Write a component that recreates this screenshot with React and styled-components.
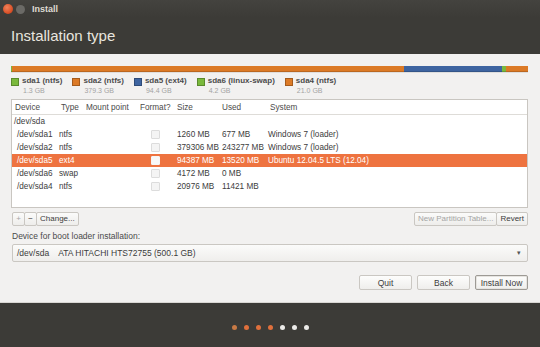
import React from 'react';
import styled, { createGlobalStyle } from 'styled-components';

const FONT = '"Liberation Sans", Arial, sans-serif';

const GlobalStyle = createGlobalStyle`
  html, body {
    margin: 0;
    padding: 0;
    background: #3c3b37;
  }
  body {
    font-family: ${FONT};
  }
`;

const PARTITIONS = [
  { name: 'sda1 (ntfs)', size: '1.3 GB', gb: 1.3, color: '#7ab93c' },
  { name: 'sda2 (ntfs)', size: '379.3 GB', gb: 379.3, color: '#dc7a26' },
  { name: 'sda5 (ext4)', size: '94.4 GB', gb: 94.4, color: '#3e64a0' },
  { name: 'sda6 (linux-swap)', size: '4.2 GB', gb: 4.2, color: '#7ab93c' },
  { name: 'sda4 (ntfs)', size: '21.0 GB', gb: 21.0, color: '#dc7a26' },
];

const ROWS = [
  { device: '/dev/sda1', type: 'ntfs', size: '1260 MB', used: '677 MB', system: 'Windows 7 (loader)' },
  { device: '/dev/sda2', type: 'ntfs', size: '379306 MB', used: '243277 MB', system: 'Windows 7 (loader)' },
  { device: '/dev/sda5', type: 'ext4', size: '94387 MB', used: '13520 MB', system: 'Ubuntu 12.04.5 LTS (12.04)', selected: true },
  { device: '/dev/sda6', type: 'swap', size: '4172 MB', used: '0 MB', system: '' },
  { device: '/dev/sda4', type: 'ntfs', size: '20976 MB', used: '11421 MB', system: '' },
];

const STEPS = ['#c87a45', '#e0703c', '#e0703c', '#e0703c', '#ecebe8', '#ecebe8', '#ecebe8'];

const App = () => {
  const total = PARTITIONS.reduce((s, p) => s + p.gb, 0);
  return (
    <>
      <GlobalStyle />
      <Window>
        <TitleBar>
          <CloseDot />
          <MinDot />
          <WindowTitle>Install</WindowTitle>
        </TitleBar>
        <Header>
          <Heading>Installation type</Heading>
        </Header>
        <Main>
          <PartitionBar>
            {PARTITIONS.map((p) => (
              <Segment key={p.name} color={p.color} style={{ flexGrow: p.gb / total }} />
            ))}
          </PartitionBar>
          <Legend>
            {PARTITIONS.map((p) => (
              <LegendItem key={p.name}>
                <Swatch color={p.color} />
                <LegendText>
                  <LegendName>{p.name}</LegendName>
                  <LegendSize>{p.size}</LegendSize>
                </LegendText>
              </LegendItem>
            ))}
          </Legend>
          <Table>
            <HeadRow>
              <HeadCell>Device</HeadCell>
              <HeadCell shift>Type</HeadCell>
              <HeadCell>Mount point</HeadCell>
              <HeadCell>Format?</HeadCell>
              <HeadCell>Size</HeadCell>
              <HeadCell>Used</HeadCell>
              <HeadCell shift>System</HeadCell>
            </HeadRow>
            <Row>
              <DiskCell>/dev/sda</DiskCell>
            </Row>
            {ROWS.map((r) => (
              <Row key={r.device} selected={r.selected}>
                <DeviceCell>{r.device}</DeviceCell>
                <Cell>{r.type}</Cell>
                <Cell />
                <CheckCell>
                  <Check selected={r.selected} />
                </CheckCell>
                <Cell>{r.size}</Cell>
                <Cell>{r.used}</Cell>
                <Cell>{r.system}</Cell>
              </Row>
            ))}
          </Table>
          <ToolRow>
            <ButtonGroup>
              <ToolButton disabled narrow>+</ToolButton>
              <ToolButton narrow>−</ToolButton>
              <ToolButton>Change...</ToolButton>
            </ButtonGroup>
            <ButtonGroup>
              <ToolButton disabled>New Partition Table...</ToolButton>
              <ToolButton>Revert</ToolButton>
            </ButtonGroup>
          </ToolRow>
          <FieldLabel>Device for boot loader installation:</FieldLabel>
          <Select>
            <SelectText>
              <span>/dev/sda</span>
              <span>ATA HITACHI HTS72755 (500.1 GB)</span>
            </SelectText>
            <Arrow>▾</Arrow>
          </Select>
          <Actions>
            <ActionButton>Quit</ActionButton>
            <ActionButton>Back</ActionButton>
            <ActionButton primary>Install Now</ActionButton>
          </Actions>
        </Main>
        <Footer>
          {STEPS.map((c, i) => (
            <StepDot key={i} color={c} />
          ))}
        </Footer>
      </Window>
    </>
  );
};

const Window = styled.div`
  width: 540px;
  height: 347px;
  display: flex;
  flex-direction: column;
  overflow: hidden;
  font-family: ${FONT};
  color: #3c3c3c;
`;

const TitleBar = styled.div`
  height: 17px;
  display: flex;
  align-items: center;
  padding-left: 3px;
  background: linear-gradient(#44433f, #3c3b37);
`;

const CloseDot = styled.div`
  width: 10px;
  height: 10px;
  border-radius: 50%;
  background: radial-gradient(circle at 40% 35%, #f2825a, #d64b22 70%);
  margin-top: 1px;
`;

const MinDot = styled.div`
  width: 9px;
  height: 9px;
  border-radius: 50%;
  margin-left: 3px;
  margin-top: 1px;
  background: #6b6a66;
`;

const WindowTitle = styled.span`
  margin-left: 7px;
  margin-top: 1px;
  font-size: 9px;
  font-weight: bold;
  color: #dfdbd2;
`;

const Header = styled.div`
  height: 37px;
  background: #3c3b37;
  padding-left: 11px;
  display: flex;
  align-items: center;
`;

const Heading = styled.h1`
  margin: 0;
  font-size: 15px;
  font-weight: normal;
  color: #e8e5df;
`;

const Main = styled.div`
  flex: 1;
  background: #f2f1f0;
  padding: 12px 12px 0 11px;
  display: flex;
  flex-direction: column;
  border-bottom: 1px solid #d9d7d3;
`;

const PartitionBar = styled.div`
  height: 6px;
  display: flex;
  box-shadow: 0 1px 0 rgba(0, 0, 0, 0.08);
`;

const Segment = styled.div`
  flex-basis: 0;
  background: ${({ color }) => color};
  box-shadow: inset 0 -1px 0 rgba(0, 0, 0, 0.15);
`;

const Legend = styled.div`
  display: flex;
  height: 20px;
  margin-top: 4px;
`;

const LegendItem = styled.div`
  display: flex;
  align-items: flex-start;
  margin-right: 10px;
`;

const Swatch = styled.div`
  width: 6px;
  height: 6px;
  margin-top: 2px;
  background: ${({ color }) => color};
  border: 1px solid rgba(0, 0, 0, 0.25);
`;

const LegendText = styled.div`
  display: flex;
  flex-direction: column;
  margin-left: 3px;
`;

const LegendName = styled.span`
  font-size: 8px;
  font-weight: bold;
  line-height: 10px;
  color: #4c4c4c;
`;

const LegendSize = styled.span`
  font-size: 7px;
  line-height: 9px;
  color: #a3a3a3;
  margin-left: 1px;
`;

const Table = styled.div`
  margin-top: 3px;
  height: 107px;
  background: #ffffff;
  border: 1px solid #c9c6c1;
  font-size: 8.2px;
`;

const COLUMNS = '44px 27px 54px 37px 45px 46px 1fr';

const HeadRow = styled.div`
  display: grid;
  grid-template-columns: ${COLUMNS};
  height: 14px;
  align-items: center;
  padding-left: 3px;
  border-bottom: 1px solid #dedcd8;
  color: #4a4a4a;
`;

const HeadCell = styled.div`
  padding-left: ${({ shift }) => (shift ? '2px' : '0')};
  white-space: nowrap;
`;

const Row = styled.div`
  display: grid;
  grid-template-columns: ${COLUMNS};
  height: 13px;
  align-items: center;
  padding-left: 3px;
  white-space: nowrap;
  background: ${({ selected }) => (selected ? '#ee7340' : 'transparent')};
  color: ${({ selected }) => (selected ? '#ffffff' : '#3c3c3c')};
`;

const Cell = styled.div``;

const DiskCell = styled.div`
  margin-left: -1px;
`;

const DeviceCell = styled.div`
  padding-left: 2px;
`;

const CheckCell = styled.div`
  display: flex;
  padding-left: 11px;
`;

const Check = styled.div`
  width: 7px;
  height: 7px;
  border-radius: 1px;
  border: 1px solid ${({ selected }) => (selected ? '#f5f5f5' : '#dcdcdc')};
  background: ${({ selected }) => (selected ? '#f8f8f8' : '#f4f4f4')};
`;

const ToolRow = styled.div`
  display: flex;
  justify-content: space-between;
  margin-top: 4px;
  padding-left: 1px;
`;

const ButtonGroup = styled.div`
  display: flex;
`;

const ToolButton = styled.button`
  height: 14px;
  padding: 0 ${({ narrow }) => (narrow ? '0' : '3px')};
  width: ${({ narrow }) => (narrow ? '13px' : 'auto')};
  font-family: ${FONT};
  font-size: 8px;
  line-height: 12px;
  color: ${({ disabled }) => (disabled ? '#a5a5a5' : '#3c3c3c')};
  background: linear-gradient(#fbfbfa, #eeedeb);
  border: 1px solid #cac7c2;
  border-radius: 2px;
  margin-left: -1px;
  &:first-child {
    margin-left: 0;
  }
`;

const FieldLabel = styled.div`
  margin-top: 5px;
  padding-left: 1px;
  font-size: 8.5px;
  line-height: 10px;
  color: #4a4a4a;
`;

const Select = styled.div`
  margin-top: 3px;
  margin-left: 1px;
  height: 16px;
  display: flex;
  align-items: center;
  justify-content: space-between;
  padding: 0 6px 0 4px;
  border: 1px solid #cac7c2;
  border-radius: 2px;
  background: linear-gradient(#fbfbfa, #efeeec);
  font-size: 8.5px;
`;

const SelectText = styled.div`
  display: flex;
  gap: 9px;
`;

const Arrow = styled.span`
  font-size: 7px;
  color: #555;
`;

const Actions = styled.div`
  display: flex;
  justify-content: flex-end;
  gap: 5px;
  margin-top: 13px;
`;

const ActionButton = styled.button`
  width: 53px;
  height: 15px;
  padding: 0;
  font-family: ${FONT};
  font-size: 8.5px;
  color: #3c3c3c;
  background: linear-gradient(#fdfdfc, #efeeec);
  border: 1px solid ${({ primary }) => (primary ? '#9d9a95' : '#cac7c2')};
  border-radius: 2px;
  box-shadow: ${({ primary }) => (primary ? 'inset 0 0 0 1px #e6e4e0' : 'none')};
`;

const Footer = styled.div`
  height: 44px;
  background: #3c3b37;
  display: flex;
  justify-content: center;
  align-items: center;
  gap: 7px;
  padding-top: 4px;
  box-sizing: border-box;
`;

const StepDot = styled.div`
  width: 5px;
  height: 5px;
  border-radius: 50%;
  background: ${({ color }) => color};
`;

export default App;
